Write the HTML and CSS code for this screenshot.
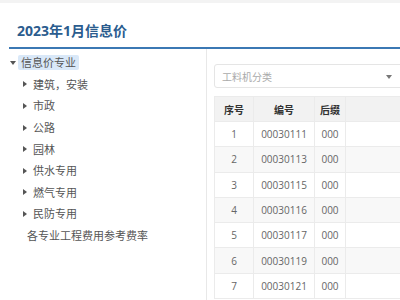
FILE: index.html
```html
<!DOCTYPE html>
<html lang="zh-CN">
<head>
<meta charset="utf-8">
<title>2023年1月信息价</title>
<link rel="stylesheet" href="styles.css">
</head>
<body>
<div class="topbar"></div>
<div class="page">
  <div class="title-bar"><h1>2023年1月信息价</h1></div>
  <div class="main">
    <aside class="tree">
      <div class="node root"><span class="tog down"></span><span class="label sel">信息价专业</span></div>
      <div class="node child"><span class="tog right"></span><span class="label">建筑，安装</span></div>
      <div class="node child"><span class="tog right"></span><span class="label">市政</span></div>
      <div class="node child"><span class="tog right"></span><span class="label">公路</span></div>
      <div class="node child"><span class="tog right"></span><span class="label">园林</span></div>
      <div class="node child"><span class="tog right"></span><span class="label">供水专用</span></div>
      <div class="node child"><span class="tog right"></span><span class="label">燃气专用</span></div>
      <div class="node child"><span class="tog right"></span><span class="label">民防专用</span></div>
      <div class="node leaf"><span class="label">各专业工程费用参考费率</span></div>
    </aside>
    <section class="content">
      <div class="select"><span class="ph">工料机分类</span><span class="caret"></span></div>
      <table class="grid">
        <thead>
          <tr><th class="c1">序号</th><th class="c2">编号</th><th class="c3">后缀</th><th class="c4"></th></tr>
        </thead>
        <tbody>
          <tr><td>1</td><td>00030111</td><td>000</td><td></td></tr>
          <tr class="alt"><td>2</td><td>00030113</td><td>000</td><td></td></tr>
          <tr><td>3</td><td>00030115</td><td>000</td><td></td></tr>
          <tr class="alt"><td>4</td><td>00030116</td><td>000</td><td></td></tr>
          <tr><td>5</td><td>00030117</td><td>000</td><td></td></tr>
          <tr class="alt"><td>6</td><td>00030119</td><td>000</td><td></td></tr>
          <tr><td>7</td><td>00030121</td><td>000</td><td></td></tr>
        </tbody>
      </table>
    </section>
  </div>
</div>
</body>
</html>
```
FILE: styles.css
```css
* { box-sizing: border-box; }
html, body { margin: 0; padding: 0; background: #fff; }
body {
  width: 400px;
  height: 300px;
  overflow: hidden;
  font-family: "Open Sans", "Noto Sans CJK SC", sans-serif;
  color: #555;
}
.topbar { height: 3px; background: #f3f3f3; }
.page { margin-left: 9px; }
.title-bar {
  height: 46px;
  padding: 18px 0 0 8px;
  border-bottom: 2px solid #3b78b4;
}
.title-bar h1 {
  margin: 0;
  font-size: 14px;
  line-height: 20px;
  font-weight: 700;
  color: #2b5c8e;
}
.main { display: flex; height: 251px; }
.tree {
  width: 198px;
  flex: none;
  border-right: 1px solid #e8e8e8;
  padding-top: 3px;
  font-size: 11px;
}
.node {
  display: flex;
  align-items: center;
  height: 21.6px;
  color: #555;
}
.tog { width: 0; height: 0; flex: none; }
.tog.down {
  border-left: 3px solid transparent;
  border-right: 3px solid transparent;
  border-top: 4px solid #555;
  margin: 0 2px 0 1px;
}
.tog.right {
  border-top: 3px solid transparent;
  border-bottom: 3px solid transparent;
  border-left: 4px solid #555;
  margin: 0 6px 0 14px;
}
.label { line-height: 15px; padding: 0 3px; white-space: nowrap; }
.child .label { padding: 0; }
.label.sel { background: #d9e8f8; border-radius: 2px; }
.leaf .label { padding: 0 0 0 18px; }
.content {
  flex: 1;
  min-width: 0;
  overflow: hidden;
  padding: 15px 0 0 7px;
}
.select {
  width: 200px;
  height: 24px;
  border: 1px solid #e5e5e5;
  border-radius: 3px;
  display: flex;
  align-items: center;
  padding-left: 7px;
  font-size: 10px;
  color: #aaa;
  position: relative;
}
.caret {
  position: absolute;
  left: 171px;
  top: 10px;
  width: 0; height: 0;
  border-left: 3.5px solid transparent;
  border-right: 3.5px solid transparent;
  border-top: 4px solid #777;
}
.grid {
  margin-top: 8px;
  border-collapse: collapse;
  width: 260px;
  table-layout: fixed;
  font-size: 10px;
}
.grid th, .grid td {
  border: 1px solid #ebebeb;
  padding: 0;
  text-align: center;
  white-space: nowrap;
}
.grid th {
  height: 25px;
  background: #f2f2f2;
  color: #333;
  font-weight: 700;
}
.grid td { height: 25.3px; color: #666; }
.grid tr.alt td { background: #f8f8f8; }
.c1 { width: 39px; }
.c2 { width: 61px; }
.c3 { width: 31px; }
```
